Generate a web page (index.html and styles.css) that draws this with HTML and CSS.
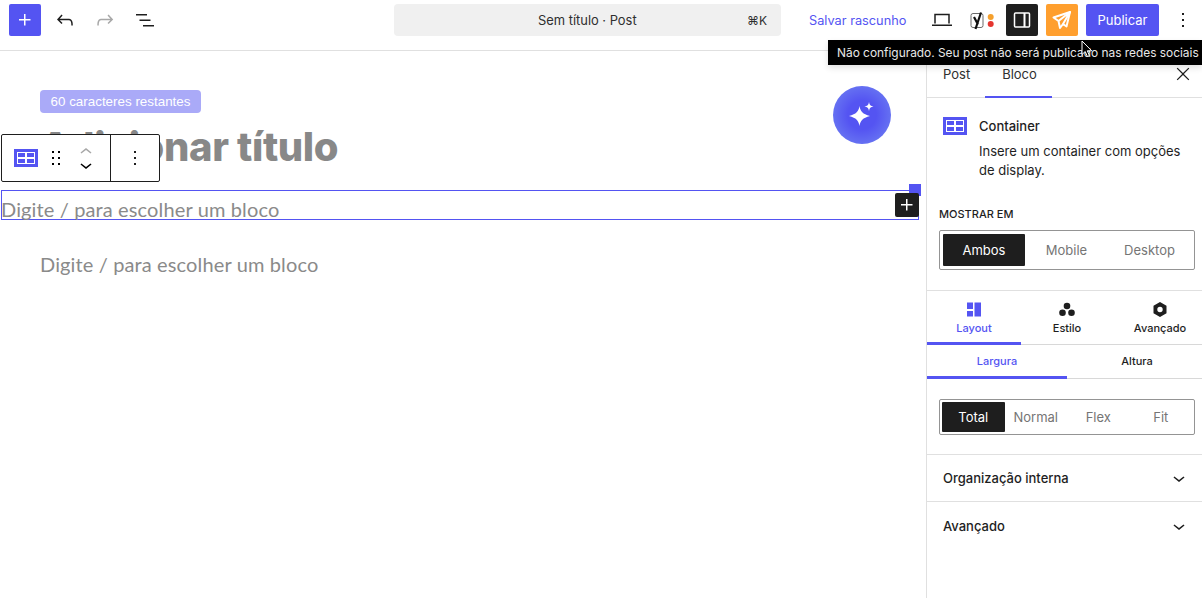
FILE: index.html
```html
<!DOCTYPE html>
<html lang="pt-BR">
<head>
    <meta charset="UTF-8">
    <title>Sem título · Post</title>
    <link rel="stylesheet" href="styles.css">
</head>
<body>
    <svg class="sprite" width="0" height="0">
        <symbol id="i-plus" viewBox="0 0 24 24"><path d="M11 12.5V17.5H12.5V12.5H17.5V11H12.5V6H11V11H6V12.5H11Z"/></symbol>
        <symbol id="i-kebab" viewBox="0 0 24 24"><path d="M13 19h-2v-2h2v2zm0-6h-2v-2h2v2zm0-6h-2V5h2v2z"/></symbol>
        <symbol id="i-chevron" viewBox="0 0 24 24"><path d="M17.5 11.6L12 16l-5.5-4.4.9-1.2L12 14l4.5-3.6 1 1.2z"/></symbol>
        <symbol id="i-container" viewBox="0 0 24 18"><path fill-rule="evenodd" d="M0 0H24V18H0ZM3 3V15H21V3ZM4 4H11V8H4ZM13 4H20V8H13ZM4 10H11V14H4ZM13 10H20V14H13Z"/></symbol>
    </svg>

    <header class="topbar">
        <div class="topbar-left">
            <button class="icon-btn btn-primary"><svg class="ico"><use href="#i-plus"/></svg></button>
            <button class="icon-btn"><svg class="ico" viewBox="0 0 24 24"><path d="M18.3 11.7c-.6-.6-1.4-.9-2.3-.9H6.7l2.9-3.3-1.1-1-4.5 5L8.5 16l1-1-2.7-2.7H16c.5 0 .9.2 1.3.5 1 1 1 3.4 1 4.5v.3h1.5v-.2c0-1.5 0-4.3-1.5-5.7z"/></svg></button>
            <button class="icon-btn is-disabled"><svg class="ico" viewBox="0 0 24 24"><path d="M15.6 6.5l-1.1 1 2.9 3.3H8c-.9 0-1.7.3-2.3.9-1.4 1.5-1.4 4.2-1.4 5.6v.2h1.5v-.3c0-1.1 0-3.5 1-4.5.3-.3.7-.5 1.3-.5h9.2L14.5 15l1.1 1.1 4.6-4.6-4.6-5z"/></svg></button>
            <button class="icon-btn"><svg class="ico" viewBox="0 0 24 24"><path d="M3 6h11v1.5H3V6zm3.5 5.5h11V13h-11v-1.5zM21 17H10v1.5h11V17z"/></svg></button>
        </div>
        <div class="command-bar">
            <span>Sem título · Post</span>
            <span class="shortcut">⌘K</span>
        </div>
        <div class="topbar-right">
            <span class="save-draft">Salvar rascunho</span>
            <button class="icon-btn">
                <svg width="20" height="14" viewBox="0 0 20 14" fill="none" stroke="#1e1e1e" stroke-width="1.5"><path d="M3 10.5V1.5h14v9"/><path d="M0 12.25h20"/></svg>
            </button>
            <div class="yoast">
                <svg width="26" height="20" viewBox="0 0 26 20">
                    <rect x="1" y="3.500" width="12" height="14" rx="2" fill="#fff" stroke="#6b6b6b" stroke-width="1"/>
                    <path d="M11 2.500L5.500 19M4 7l4 7.500" fill="none" stroke="#111" stroke-width="2.200"/>
                    <circle cx="20.700" cy="7" r="3" fill="#f5a02c"/>
                    <circle cx="20.700" cy="14" r="3" fill="#e5352f"/>
                </svg>
            </div>
            <button class="icon-btn btn-dark">
                <svg width="18" height="18" viewBox="0 0 18 18" fill="none" stroke="#fff" stroke-width="1.5"><rect x="1.500" y="2" width="15" height="14" rx="1"/><path d="M11.500 2v14" stroke-width="2"/></svg>
            </button>
            <button class="icon-btn btn-orange">
                <svg width="20" height="20" viewBox="0 0 20 20" fill="none" stroke="#fff" stroke-width="2" stroke-linejoin="round"><path d="M18 2L1.5 7.5l5 3.5 1.5 7 3-4 3.5 2.5L18 2z"/><path d="M6.5 11L18 2l-7 12"/></svg>
            </button>
            <button class="publish-btn">Publicar</button>
            <button class="icon-btn kebab-btn"><svg class="ico"><use href="#i-kebab"/></svg></button>
        </div>
    </header>

    <div class="tooltip">Não configurado. Seu post não será publicado nas redes sociais</div>
    <svg class="cursor" width="12" height="18" viewBox="0 0 12 18"><path d="M1 1v13.5l3.2-3 2.2 5 2-.9-2.1-4.800h4.400L1 1z" fill="#000" stroke="#fff" stroke-width="1"/></svg>

    <div class="workspace">
        <main class="editor">
            <span class="char-badge">60 caracteres restantes</span>
            <h1 class="post-title">Adicionar título</h1>

            <div class="selected-block">
                <p class="placeholder">Digite / para escolher um bloco</p>
                <span class="block-handle"></span>
                <button class="block-add"><svg class="ico"><use href="#i-plus"/></svg></button>
            </div>
            <p class="placeholder placeholder-next">Digite / para escolher um bloco</p>

            <div class="block-toolbar">
                <div class="toolbar-group">
                    <svg class="tb-container"><use href="#i-container"/></svg>
                    <svg class="tb-drag" viewBox="0 0 24 24"><path d="M8 7h2V5H8v2zm0 6h2v-2H8v2zm0 6h2v-2H8v2zm6-14v2h2V5h-2zm0 8h2v-2h-2v2zm0 6h2v-2h-2v2z"/></svg>
                    <div class="tb-mover">
                        <svg class="mover-up"><use href="#i-chevron"/></svg>
                        <svg class="mover-down"><use href="#i-chevron"/></svg>
                    </div>
                </div>
                <div class="toolbar-more"><svg class="ico"><use href="#i-kebab"/></svg></div>
            </div>

            <button class="ai-button">
                <svg width="30" height="30" viewBox="0 0 30 30" fill="#fff">
                    <path d="M12.500 6c.9 5.500 3.100 8 10.500 10-7.400 2-9.600 4.500-10.500 10-.9-5.500-3.100-8-10.500-10 7.400-2 9.600-4.500 10.500-10z"/>
                    <path d="M22 2c.5 3 1.500 4 4.500 4.500-3 .5-4 1.500-4.500 4.500-.5-3-1.500-4-4.500-4.500 3-.5 4-1.500 4.500-4.500z"/>
                </svg>
            </button>
        </main>

        <aside class="sidebar">
            <div class="sidebar-tabs">
                <span class="sidebar-tab">Post</span>
                <span class="sidebar-tab is-active">Bloco</span>
                <svg class="sidebar-close" viewBox="0 0 24 24"><path d="m13.06 12 6.47-6.47-1.06-1.06L12 10.94 5.53 4.47 4.47 5.53 10.94 12l-6.47 6.47 1.06 1.06L12 13.06l6.47 6.47 1.06-1.06L13.06 12Z"/></svg>
            </div>

            <div class="block-card">
                <svg class="card-icon"><use href="#i-container"/></svg>
                <div class="card-text">
                    <h2>Container</h2>
                    <p>Insere um container com opções de display.</p>
                </div>
            </div>

            <div class="show-on">
                <h3>Mostrar em</h3>
                <div class="segmented segmented-lg">
                    <span class="segment is-active">Ambos</span>
                    <span class="segment">Mobile</span>
                    <span class="segment">Desktop</span>
                </div>
            </div>

            <div class="style-tabs">
                <div class="style-tab is-active">
                    <svg width="14" height="14" viewBox="0 0 14 14"><path d="M0 0h6v6.500H0zM0 8.500h6V14H0zM7.500 0H14v14H7.500z"/></svg>
                    <span>Layout</span>
                </div>
                <div class="style-tab style-tab-mid">
                    <svg width="16" height="14" viewBox="0 0 16 14"><circle cx="8" cy="3.500" r="3.300"/><circle cx="3.500" cy="10.300" r="3.300"/><circle cx="12.500" cy="10.300" r="3.300"/></svg>
                    <span>Estilo</span>
                </div>
                <div class="style-tab">
                    <svg width="14" height="15" viewBox="0 0 14 15"><path fill-rule="evenodd" d="M7 0l6.500 3.750v7.500L7 15 .5 11.250v-7.500L7 0zm0 4.800a2.700 2.700 0 100 5.400 2.700 2.700 0 000-5.400z"/></svg>
                    <span>Avançado</span>
                </div>
            </div>

            <div class="size-tabs">
                <span class="size-tab is-active">Largura</span>
                <span class="size-tab">Altura</span>
            </div>

            <div class="width-options">
                <div class="segmented segmented-sm">
                    <span class="segment is-active">Total</span>
                    <span class="segment">Normal</span>
                    <span class="segment">Flex</span>
                    <span class="segment">Fit</span>
                </div>
            </div>

            <div class="panel-row">
                <span>Organização interna</span>
                <svg class="ico"><use href="#i-chevron"/></svg>
            </div>
            <div class="panel-row panel-row-last">
                <span>Avançado</span>
                <svg class="ico"><use href="#i-chevron"/></svg>
            </div>
        </aside>
    </div>
</body>
</html>
```

FILE: styles.css
```css
* {
    box-sizing: border-box;
}
html, body {
    height: 100%;
}
body {
    margin: 0;
    font-family: Inter, "Liberation Sans", sans-serif;
    font-size: 13px;
    color: #1e1e1e;
    background: #fff;
    overflow: hidden;
    position: relative;
}
button {
    font-family: inherit;
    border: none;
    background: none;
    padding: 0;
    cursor: pointer;
}
.sprite {
    position: absolute;
}
.ico {
    width: 24px;
    height: 24px;
    fill: #1e1e1e;
    display: block;
}

/* barra superior */
.topbar {
    height: 51px;
    display: flex;
    align-items: flex-start;
    padding-top: 4px;
    border-bottom: 1px solid #e0e0e0;
}
.topbar-left {
    width: 394px;
    padding-left: 9px;
    display: flex;
    gap: 8px;
}
.icon-btn {
    width: 32px;
    height: 32px;
    border-radius: 2px;
    display: flex;
    align-items: center;
    justify-content: center;
    flex: none;
}
.btn-primary {
    background: #5454f2;
}
.btn-primary .ico, .btn-dark .ico {
    fill: #fff;
}
.is-disabled .ico {
    fill: #a8a8a8;
}
.btn-dark {
    background: #1e1e1e;
}
.btn-orange {
    background: #ff9f2e;
    margin-left: 8px;
}
.command-bar {
    width: 387px;
    height: 32px;
    background: #f0f0f0;
    border-radius: 4px;
    display: flex;
    align-items: center;
    justify-content: space-between;
    padding: 0 14px 0 144px;
    font-size: 12.900px;
    color: #2f2f2f;
}
.shortcut {
    font-size: 12px;
}
.topbar-right {
    margin-left: 28px;
    display: flex;
    align-items: center;
    height: 32px;
}
.save-draft {
    color: #5454f2;
    font-size: 12.750px;
    width: 117px;
    flex: none;
}
.yoast {
    width: 48px;
    height: 32px;
    padding-left: 12px;
    display: flex;
    align-items: center;
    flex: none;
}
.publish-btn {
    width: 73px;
    height: 32px;
    margin-left: 8px;
    background: #5454f2;
    color: #fff;
    font-size: 13px;
    border-radius: 2px;
    flex: none;
}
.kebab-btn {
    margin-left: 8px;
}

/* tooltip e cursor ficam por cima de tudo */
.tooltip {
    position: absolute;
    left: 828px;
    top: 40px;
    width: 374px;
    height: 25px;
    padding-left: 9px;
    background: #000;
    color: #e8e8e8;
    font-size: 11.900px;
    line-height: 25px;
    white-space: nowrap;
    box-shadow: 0 3px 6px rgba(0, 0, 0, 0.12);
    z-index: 5;
}
.cursor {
    position: absolute;
    left: 1081px;
    top: 40px;
    z-index: 6;
}

.workspace {
    display: flex;
    height: calc(100% - 51px);
}

/* area do editor */
.editor {
    flex: 1;
    position: relative;
    padding: 39px 7px 0 1px;
}
.char-badge {
    display: block;
    width: 161px;
    height: 23px;
    margin-left: 39px;
    background: #aaaaf8;
    color: #fff;
    border-radius: 4px;
    font-family: "Liberation Sans", sans-serif;
    font-size: 13.400px;
    line-height: 23px;
    text-align: center;
}
.post-title {
    margin: 11px 0 0 39px;
    height: 46px;
    font-size: 40px;
    line-height: 46px;
    font-weight: 800;
    letter-spacing: -0.370px;
    color: #888;
}
.selected-block {
    position: relative;
    height: 30px;
    margin-top: 20px;
    border: 1px solid #5454f2;
}
.placeholder {
    margin: 0;
    font-family: Lato, sans-serif;
    font-size: 20px;
    letter-spacing: 0.130px;
    line-height: 38px;
    color: #8a8a8a;
}
.selected-block .placeholder {
    margin-left: -1px;
    line-height: 36px;
}
.placeholder-next {
    margin: 25px 0 0 39px;
}
.block-handle {
    position: absolute;
    right: -3px;
    top: -7px;
    width: 12px;
    height: 12px;
    background: #5454f2;
}
.block-add {
    position: absolute;
    right: -1px;
    top: 2px;
    width: 24px;
    height: 24px;
    background: #1e1e1e;
    border-radius: 2px;
}
.block-add .ico {
    fill: #fff;
}
.block-toolbar {
    position: absolute;
    left: 1px;
    top: 83px;
    width: 159px;
    height: 48px;
    display: flex;
    background: #fff;
    border: 1px solid #1e1e1e;
    border-radius: 2px;
}
.toolbar-group {
    width: 109px;
    border-right: 1px solid #1e1e1e;
    display: flex;
    align-items: center;
    padding-left: 12px;
}
.tb-container {
    width: 24px;
    height: 18px;
    fill: #5454f2;
    flex: none;
}
.tb-drag {
    width: 24px;
    height: 24px;
    margin-left: 6px;
    flex: none;
}
.tb-mover {
    margin-left: 6px;
    display: flex;
    flex-direction: column;
}
.tb-mover svg {
    width: 24px;
    height: 24px;
    display: block;
}
.mover-up {
    fill: #a8a8a8;
    transform: scaleY(-1);
}
.tb-mover .mover-down {
    margin-top: -11px;
}
.toolbar-more {
    flex: 1;
    display: flex;
    align-items: center;
    justify-content: center;
}
.ai-button {
    position: absolute;
    left: 833px;
    top: 35px;
    width: 58px;
    height: 58px;
    border-radius: 50%;
    background: radial-gradient(circle, #5454f2 35%, #6a78f2 80%, #7ba2f6 100%);
    display: flex;
    align-items: center;
    justify-content: center;
}

/* barra lateral */
.sidebar {
    width: 276px;
    flex: none;
    overflow: hidden;
    border-left: 1px solid #e0e0e0;
}
.sidebar-tabs {
    height: 47px;
    display: flex;
    position: relative;
    border-bottom: 1px solid #e0e0e0;
}
.sidebar-tab {
    height: 47px;
    padding: 0 16px;
    line-height: 46px;
    color: #2f2f2f;
}
.sidebar-tab.is-active {
    border-bottom: 2px solid #5454f2;
    margin-left: -1px;
    padding: 0 15px 0 17px;
}
.sidebar-close {
    position: absolute;
    right: 9px;
    top: 13px;
    width: 20px;
    height: 20px;
    fill: #1e1e1e;
}
.block-card {
    display: flex;
    gap: 12px;
    padding: 19px 16px 0;
}
.card-icon {
    width: 24px;
    height: 18px;
    fill: #5454f2;
    flex: none;
}
.card-text h2 {
    margin: 0;
    font-size: 13px;
    font-weight: 500;
    line-height: 19px;
}
.card-text p {
    margin: 6px 0 0;
    line-height: 19px;
    width: 210px;
}
.show-on {
    padding: 0 7px 0 12px;
    height: 85px;
    border-bottom: 1px solid #e0e0e0;
}
.show-on h3 {
    margin: 26px 0 0;
    font-size: 11px;
    font-weight: 500;
    line-height: 16px;
    text-transform: uppercase;
}
.segmented {
    display: flex;
    border: 1px solid #949494;
    border-radius: 2px;
    align-items: center;
}
.segmented-lg {
    height: 40px;
    margin-top: 8px;
    padding: 0 3px;
}
.segmented-lg .segment {
    flex: 1;
    height: 32px;
}
.segmented-lg .segment.is-active {
    flex: none;
    width: 82px;
}
.segmented-sm {
    height: 36px;
    padding: 0 2px;
}
.segmented-sm .segment {
    width: 62.500px;
    height: 30px;
}
.segment {
    display: flex;
    align-items: center;
    justify-content: center;
    color: #757575;
    border-radius: 1px;
}
.segment.is-active {
    background: #1e1e1e;
    color: #fff;
}
.style-tabs {
    height: 54px;
    display: flex;
    border-bottom: 1px solid #d8d8d8;
}
.style-tab {
    width: 94px;
    flex: none;
    display: flex;
    flex-direction: column;
    align-items: center;
    padding-top: 11px;
    font-size: 11px;
    font-weight: 500;
    line-height: 14px;
    gap: 4px;
}
.style-tab-mid {
    width: 92px;
}
.style-tab svg {
    fill: #1e1e1e;
    display: block;
    height: 15px;
}
.style-tab.is-active {
    color: #5454f2;
    border-bottom: 3px solid #5454f2;
    height: 54px;
}
.style-tab.is-active svg {
    fill: #5454f2;
}
.size-tabs {
    height: 34px;
    display: flex;
    border-bottom: 1px solid #d8d8d8;
}
.size-tab {
    width: 140px;
    flex: none;
    height: 34px;
    text-align: center;
    font-size: 11px;
    font-weight: 500;
    line-height: 33px;
}
.size-tab.is-active {
    color: #5454f2;
    border-bottom: 3px solid #5454f2;
}
.width-options {
    height: 76px;
    padding: 20px 7px 0 12px;
    border-bottom: 1px solid #e0e0e0;
}
.panel-row {
    height: 47px;
    display: flex;
    align-items: center;
    justify-content: space-between;
    padding: 0 11px 0 16px;
    font-weight: 500;
    border-bottom: 1px solid #e0e0e0;
}
.panel-row-last {
    border-bottom: none;
}
```
